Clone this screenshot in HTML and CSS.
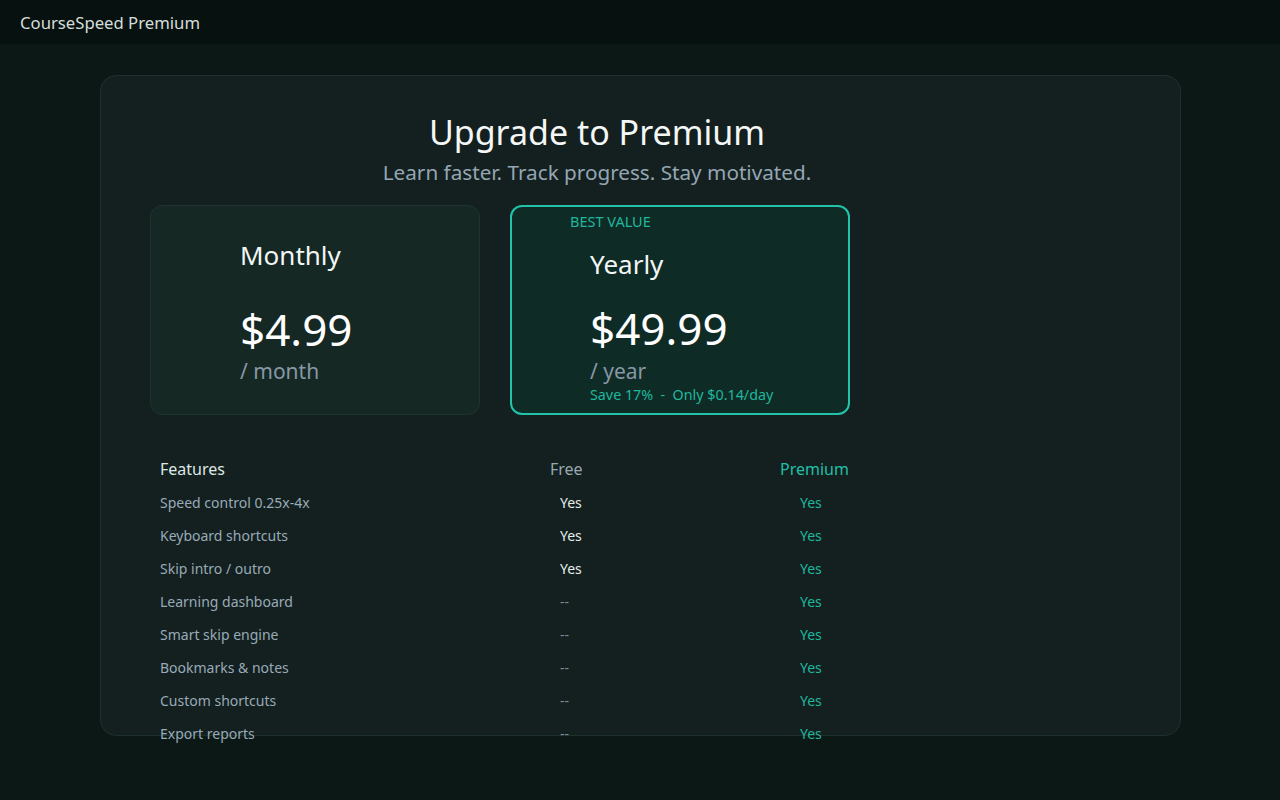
FILE: index.html
```html
<!DOCTYPE html>
<html>
<head>
<meta charset="utf-8">
<link rel="stylesheet" href="styles.css">
</head>
<body>
<header class="topbar">CourseSpeed Premium</header>
<main class="page">
  <section class="panel">
    <div class="content">
      <h1 class="title">Upgrade to Premium</h1>
      <p class="subtitle">Learn faster. Track progress. Stay motivated.</p>
      <div class="plans">
        <div class="plan plan-monthly">
          <div class="plan-name">Monthly</div>
          <div class="plan-price">$4.99</div>
          <div class="plan-period">/ month</div>
        </div>
        <div class="plan plan-yearly">
          <div class="badge">BEST VALUE</div>
          <div class="plan-body">
            <div class="plan-name">Yearly</div>
            <div class="plan-price">$49.99</div>
            <div class="plan-period">/ year</div>
            <div class="plan-save">Save 17% &nbsp;-&nbsp; Only $0.14/day</div>
          </div>
        </div>
      </div>
      <div class="features">
        <div class="row head">
          <div class="c-name">Features</div>
          <div class="c-free">Free</div>
          <div class="c-prem">Premium</div>
        </div>
        <div class="row"><div class="c-name">Speed control 0.25x-4x</div><div class="c-free yes">Yes</div><div class="c-prem">Yes</div></div>
        <div class="row"><div class="c-name">Keyboard shortcuts</div><div class="c-free yes">Yes</div><div class="c-prem">Yes</div></div>
        <div class="row"><div class="c-name">Skip intro / outro</div><div class="c-free yes">Yes</div><div class="c-prem">Yes</div></div>
        <div class="row"><div class="c-name">Learning dashboard</div><div class="c-free no">--</div><div class="c-prem">Yes</div></div>
        <div class="row"><div class="c-name">Smart skip engine</div><div class="c-free no">--</div><div class="c-prem">Yes</div></div>
        <div class="row"><div class="c-name">Bookmarks &amp; notes</div><div class="c-free no">--</div><div class="c-prem">Yes</div></div>
        <div class="row"><div class="c-name">Custom shortcuts</div><div class="c-free no">--</div><div class="c-prem">Yes</div></div>
        <div class="row"><div class="c-name">Export reports</div><div class="c-free no">--</div><div class="c-prem">Yes</div></div>
      </div>
    </div>
  </section>
</main>
</body>
</html>
```

FILE: styles.css
```css
* { box-sizing: border-box; }
html, body { margin: 0; padding: 0; height: 100%; }
body {
  background: #0b1815;
  font-family: "Noto Sans", "Open Sans", sans-serif;
  color: #e8eeec;
  overflow: hidden;
}
.topbar {
  height: 44px;
  background: #071210;
  padding-left: 20px;
  padding-top: 1px;
  display: flex;
  align-items: center;
  font-size: 16.7px;
  color: #d6dedb;
}
.page {
  padding: 31px 99px 0 100px;
}
.panel {
  height: 661px;
  background: #13201f;
  border: 1px solid #1d302c;
  border-radius: 16px;
  padding: 0 49px;
}
.content {
  width: 894px;
}
.title {
  margin: 0;
  padding-top: 33px;
  text-align: center;
  font-weight: 400;
  font-size: 34px;
  line-height: 46px;
  color: #f4f7f6;
}
.subtitle {
  margin: 2px 0 0;
  text-align: center;
  font-size: 20.7px;
  line-height: 30px;
  color: #95a6b3;
}
.plans {
  display: flex;
  gap: 30px;
  margin-top: 18px;
}
.plan {
  height: 210px;
  border-radius: 12px;
  display: flex;
  flex-direction: column;
  justify-content: center;
}
.plan-monthly {
  width: 330px;
  background: #152824;
  border: 1px solid #1e332f;
  padding-left: 89px;
  padding-top: 2px;
}
.plan-yearly {
  width: 340px;
  background: #0f2b26;
  border: 2px solid #22c3a9;
  padding-left: 58px;
  justify-content: flex-start;
}
.badge {
  margin-top: 5px;
  font-size: 14.5px;
  line-height: 19px;
  color: #1fb79d;
}
.plan-body {
  padding-left: 20px;
  margin-top: 16px;
}
.plan-name {
  font-size: 26px;
  line-height: 34px;
  color: #f2f6f5;
}
.plan-price {
  margin-top: 30px;
  font-size: 44px;
  line-height: 54px;
  color: #ffffff;
}
.plan-period {
  margin-top: 2px;
  font-size: 21px;
  line-height: 26px;
  color: #8797a5;
}
.plan-yearly .plan-price { margin-top: 20px; }
.plan-yearly .plan-period { margin-top: 3px; }
.plan-save {
  font-size: 14.3px;
  line-height: 20px;
  color: #1fb79d;
  margin-top: 1px;
}
.features {
  margin-top: 37px;
  padding-left: 10px;
}
.row {
  display: grid;
  grid-template-columns: 390px 230px 1fr;
  height: 33px;
  align-items: center;
  font-size: 14px;
}
.row.head {
  font-size: 16px;
  height: 34px;
}
.c-name { color: #99aab8; }
.head .c-name { color: #dfe7e4; }
.head .c-free { color: #9aa7b1; padding-left: 0; }
.head .c-prem { color: #22bfa5; padding-left: 0; }
.c-free { padding-left: 10px; }
.c-free.yes { color: #e6ecea; }
.c-free.no { color: #7b8a94; }
.c-prem { padding-left: 20px; color: #1fb79d; }
```
